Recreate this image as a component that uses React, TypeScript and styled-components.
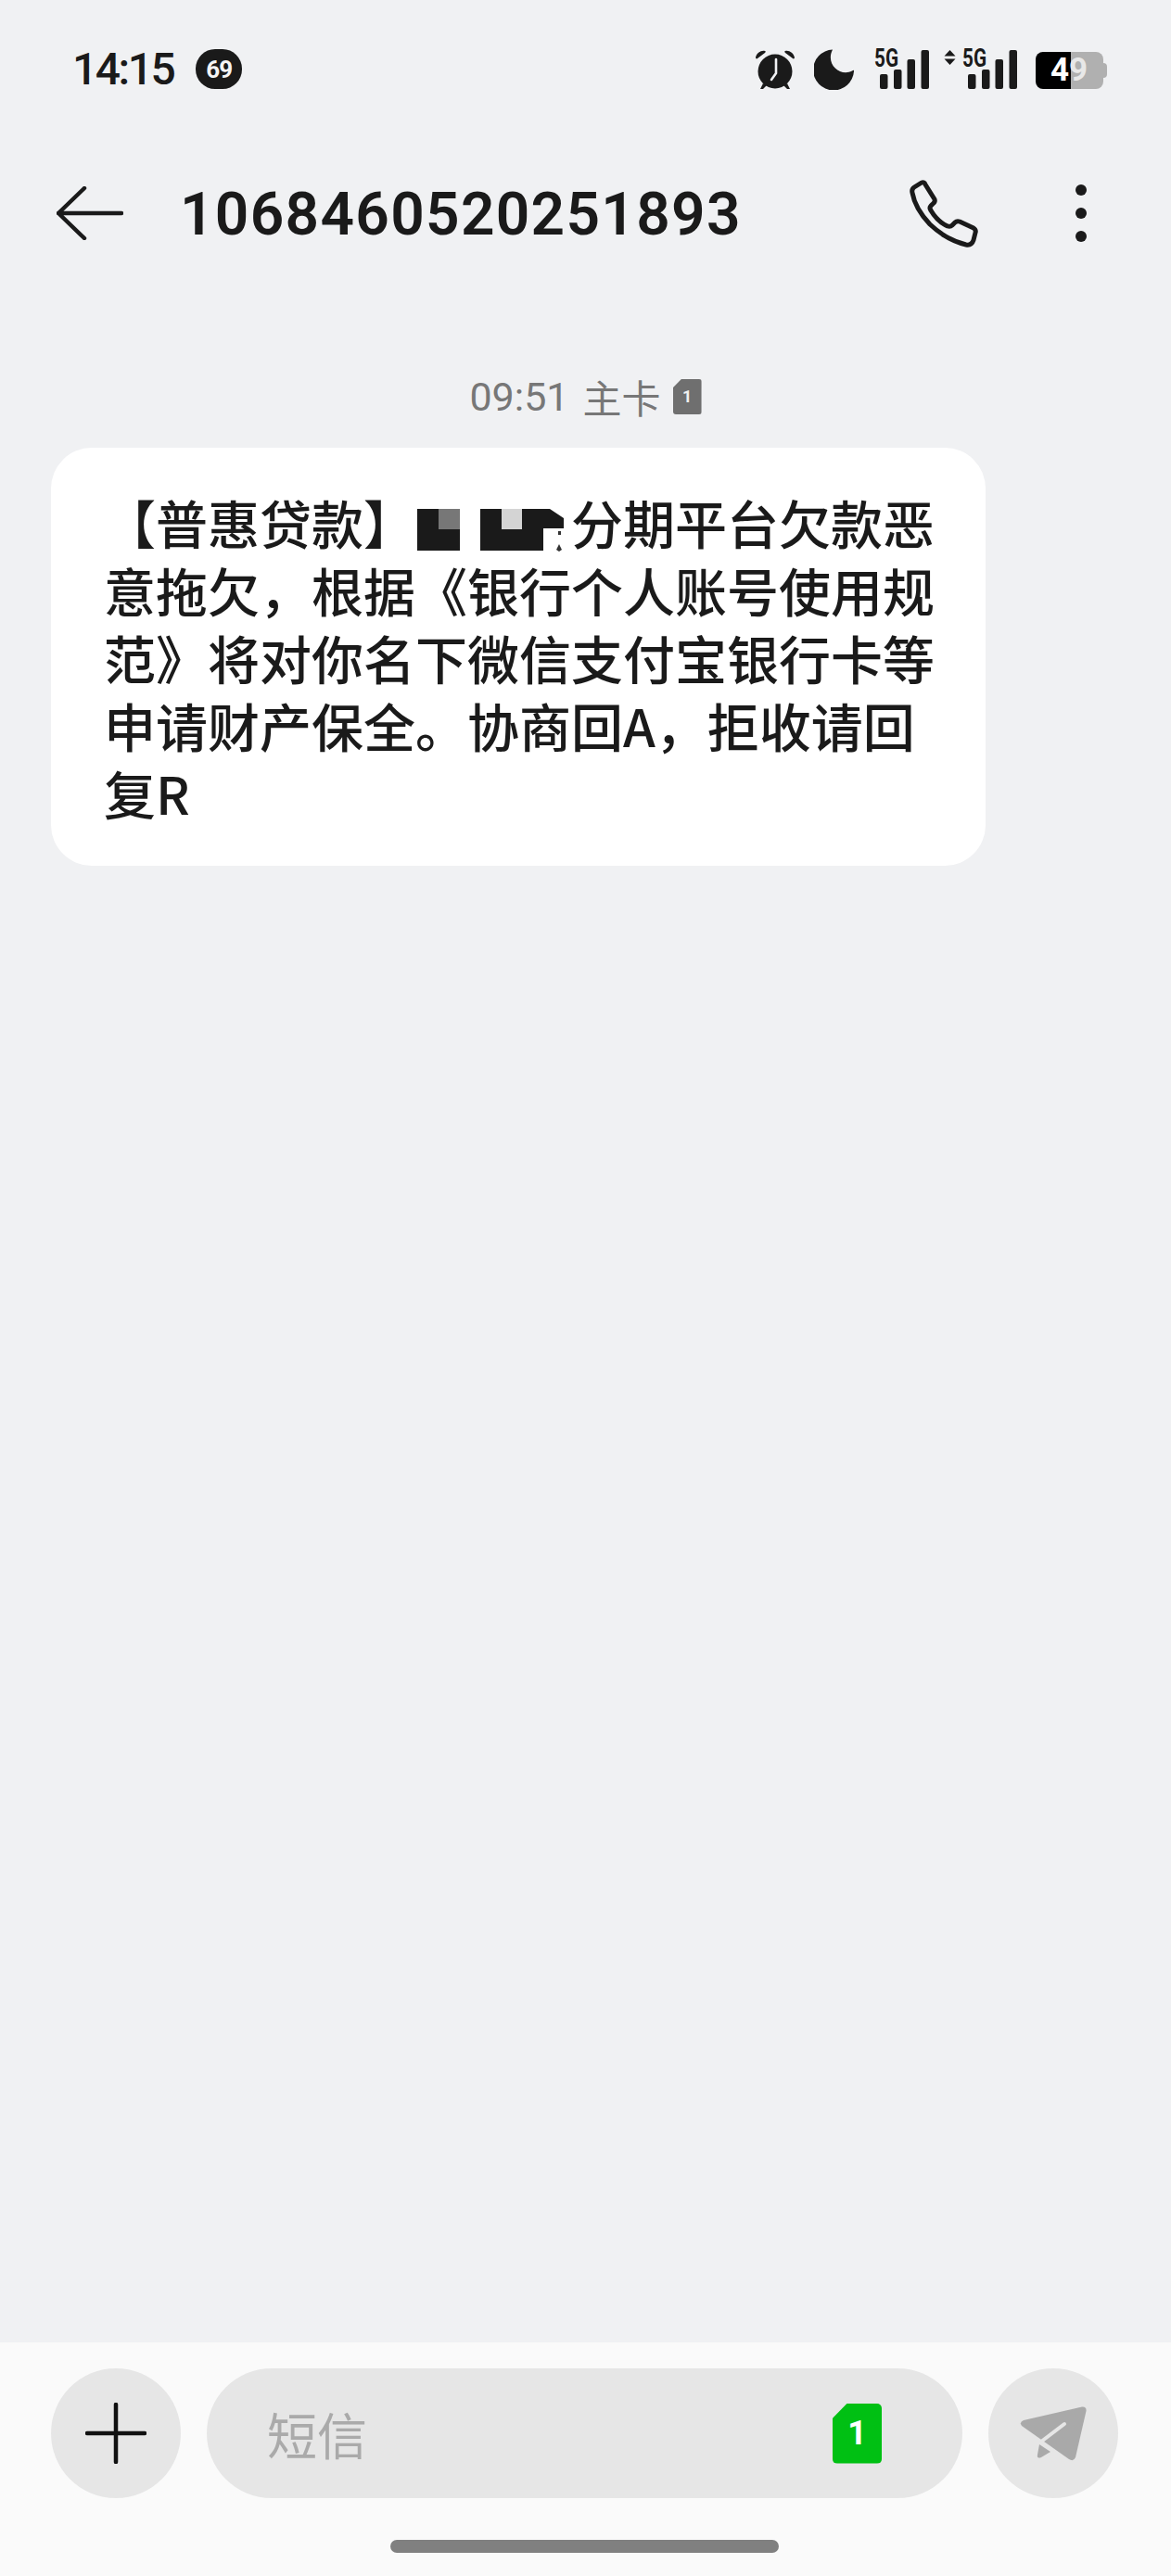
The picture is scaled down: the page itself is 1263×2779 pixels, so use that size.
import styled, { createGlobalStyle } from "styled-components";

const GlobalStyle = createGlobalStyle`
  html, body {
    margin: 0;
    padding: 0;
    background: #f0f1f3;
  }
  * {
    box-sizing: border-box;
  }
`;

function Mosaic() {
  return (
    <MosaicSvg viewBox="-1 0 168 46" width={168} height={46}>
      <rect x="1" y="0" width="46" height="45" fill="#1a1a1a" />
      <rect x="24" y="0" width="23" height="22" fill="#777777" />
      <rect x="69" y="0" width="68" height="45" fill="#1a1a1a" />
      <rect x="92" y="0" width="22" height="22" fill="#d4d4d4" />
      <path d="M137 0h7l15 10v11h-22z" fill="#1a1a1a" />
      <path d="M153 24h3v4h-3zM151 44l3-6 3 6-3 2z" fill="#333" />
    </MosaicSvg>
  );
}

const Signal = ({ arrows }: { arrows?: boolean }) => (
  <SignalSvg
    $arrows={arrows}
    width={arrows ? 78 : 59}
    height="44"
    viewBox={arrows ? "-19 0 78 44" : "0 0 59 44"}
  >
    {arrows && <path d="M-13.5 1l6 6.5h-12zM-13.5 17l6-6.5h-12z" fill="#1a1a1a" />}
    <SignalLabel x="0" y="19" textLength="26" lengthAdjust="spacingAndGlyphs">
      5G
    </SignalLabel>
    <rect x="6" y="27" width="8.500" height="16" rx="2" fill="#1a1a1a" />
    <rect x="21" y="22" width="8.500" height="21" rx="2" fill="#1a1a1a" />
    <rect x="35.500" y="11" width="8.500" height="32" rx="2" fill="#1a1a1a" />
    <rect x="50.500" y="1" width="8.500" height="42" rx="2" fill="#1a1a1a" />
  </SignalSvg>
);

export default function App() {
  return (
    <Screen>
      <GlobalStyle />
      <StatusBar>
        <Clock>14:15</Clock>
        <CountBadge>69</CountBadge>
        <StatusIcons>
          <svg width="44" height="44" viewBox="0 0 44 44">
            <circle cx="22" cy="24" r="18.500" fill="#1a1a1a" />
            <path d="M1 9c1-5 6-8 10-7 1 0 1 1 0 2L3 10c-1 1-2 0-2-1zM43 9c-1-5-6-8-10-7-1 0-1 1 0 2l8 6c1 1 2 0 2-1z" fill="#1a1a1a" />
            <path d="M9 37l-3 6h3l4-4zM35 37l3 6h-3l-4-4z" fill="#1a1a1a" />
            <path d="M23 11v15l-5 7" fill="none" stroke="#f0f1f3" strokeWidth="2.600" strokeLinecap="round" strokeLinejoin="round" />
          </svg>
          <svg width="44" height="44" viewBox="0 0 44 44">
            <path d="M20 0.500A22 22 0 1 0 43 24Q43.500 22 41 23.500C28 30 12 16 20 0.500Z" fill="#1a1a1a" />
          </svg>
          <Signal />
          <Signal arrows />
          <Battery>
            <BatteryDigit>4</BatteryDigit>
            <BatteryDigit $dim>9</BatteryDigit>
          </Battery>
        </StatusIcons>
      </StatusBar>

      <Header>
        <svg width="72" height="58" viewBox="0 0 72 58">
          <path d="M30 2L2 29l28 27M2 29h68" fill="none" stroke="#1a1a1a" strokeWidth="4.500" strokeLinecap="round" strokeLinejoin="round" />
        </svg>
        <Title>1068460520251893</Title>
        <svg width="74" height="74" viewBox="0 0 74 74">
          <path
            d="M5 9L13 4Q16 3 17 6L27 22Q28 25 25 27L23 29Q21 31 23 34Q30 46 41 51Q44 52 46 50L49 47Q51 45 54 46L69 53Q72 55 71 58L69 66Q67 72 61 71Q40 66 22 49Q6 32 3 15Q2 11 5 9Z"
            fill="none"
            stroke="#1a1a1a"
            strokeWidth="5"
            strokeLinejoin="round"
          />
        </svg>
        <MoreDots>
          <i />
          <i />
          <i />
        </MoreDots>
      </Header>

      <Thread>
        <Timestamp>
          <TimeText>09:51</TimeText>
          <CardText>主卡</CardText>
          <SimBadge $size="small">1</SimBadge>
        </Timestamp>
        <Bubble>
          <MessageLine>
            【普惠贷款】
            <Mosaic />
            分期平台欠款恶
          </MessageLine>
          <MessageLine>
            意拖欠，根据<Bracket>《</Bracket>银行个人账号使用规
          </MessageLine>
          <MessageLine>
            范<Bracket>》</Bracket>将对你名下微信支付宝银行卡等
          </MessageLine>
          <MessageLine>申请财产保全。协商回A，拒收请回</MessageLine>
          <MessageLine>复R</MessageLine>
        </Bubble>
      </Thread>

      <Composer>
        <ComposerRow>
          <RoundButton>
            <svg width="66" height="66" viewBox="0 0 66 66">
              <path d="M33 2v62M2 33h62" fill="none" stroke="#111" strokeWidth="4.500" strokeLinecap="round" />
            </svg>
          </RoundButton>
          <InputPill>
            <Placeholder>短信</Placeholder>
            <SimBadge $size="large">1</SimBadge>
          </InputPill>
          <RoundButton>
            <svg width="72" height="61" viewBox="0 0 72 61">
              <path d="M4 16L67 1.500Q72 1 71.500 6L60 56Q58 61 53 58L2 22Q-1 18 4 16Z" fill="#a9a9a9" />
              <path d="M21 42L33 50L23 56Q18 58 19 53Z" fill="#a9a9a9" />
              <path d="M48 20L23 39" fill="none" stroke="#e6e6e6" strokeWidth="4" strokeLinecap="round" />
            </svg>
          </RoundButton>
        </ComposerRow>
        <HomeIndicator />
      </Composer>
    </Screen>
  );
}

const Screen = styled.div`
  width: 1263px;
  height: 2779px;
  display: flex;
  flex-direction: column;
  background: #f0f1f3;
  overflow: hidden;
  font-family: "Noto Sans CJK SC", "Noto Sans", sans-serif;
  color: #1a1a1a;
`;

const StatusBar = styled.div`
  height: 150px;
  padding: 53px 73px 0 78px;
  display: flex;
  align-items: flex-start;
`;

const Clock = styled.span`
  font: 500 48px/44px Roboto, sans-serif;
  letter-spacing: -2.500px;
  color: #1a1a1a;
`;

const CountBadge = styled.span`
  margin-left: 24px;
  width: 50px;
  height: 43px;
  border-radius: 21px;
  background: #1a1a1a;
  color: #f4f4f4;
  display: flex;
  align-items: center;
  justify-content: center;
  font: 700 26px/1 Roboto, sans-serif;
  letter-spacing: -1px;
`;

const StatusIcons = styled.div`
  margin-left: auto;
  display: flex;
  align-items: flex-start;
  gap: 20px;
`;

const SignalSvg = styled.svg<{ $arrows?: boolean }>`
  margin-left: ${({ $arrows }) => ($arrows ? "-3px" : "1px")};
  overflow: visible;
`;

const SignalLabel = styled.text`
  font: 700 27px/19px Roboto, sans-serif;
  fill: #1a1a1a;
`;

const Battery = styled.div`
  position: relative;
  width: 73px;
  height: 40px;
  margin-top: 3px;
  padding-left: 16px;
  border-radius: 8px;
  background: linear-gradient(to right, #000 38px, #b0b0b0 38px);
  display: flex;
  align-items: center;

  &::after {
    content: "";
    position: absolute;
    right: -4px;
    top: 12px;
    width: 4px;
    height: 16px;
    border-radius: 0 4px 4px 0;
    background: #b0b0b0;
  }
`;

const BatteryDigit = styled.span<{ $dim?: boolean }>`
  font: 700 35px/40px Roboto, sans-serif;
  color: ${({ $dim }) => ($dim ? "#e8e8e8" : "#ffffff")};
`;

const Header = styled.div`
  height: 160px;
  padding: 0 91px 0 61px;
  display: flex;
  align-items: center;
`;

const Title = styled.h1`
  flex: 1;
  margin: 0 0 0 61px;
  padding-top: 4px;
  font: 600 64px/1 Roboto, sans-serif;
  letter-spacing: 1.300px;
  color: #1a1a1a;
`;

const MoreDots = styled.div`
  margin-left: 105px;
  display: flex;
  flex-direction: column;
  gap: 13px;

  i {
    display: block;
    width: 12px;
    height: 12px;
    border-radius: 50%;
    background: #1a1a1a;
  }
`;

const Thread = styled.div`
  flex: 1;
  padding: 90px 0 0 55px;
  display: flex;
  flex-direction: column;
`;

const Timestamp = styled.div`
  height: 56px;
  margin: 0 0 27px -55px;
  display: flex;
  align-items: center;
  justify-content: center;
  color: #777777;
`;

const TimeText = styled.span`
  font: 400 43px/1 Roboto, sans-serif;
`;

const CardText = styled.span`
  margin: 0 13px 0 15px;
  font-size: 42px;
  font-weight: 400;
  line-height: 1;
`;

const SimBadge = styled.span<{ $size: "small" | "large" }>`
  display: flex;
  align-items: center;
  justify-content: center;
  width: ${({ $size }) => ($size === "small" ? "31px" : "53px")};
  height: ${({ $size }) => ($size === "small" ? "38px" : "65px")};
  background: ${({ $size }) => ($size === "small" ? "#6f6f6f" : "#00c013")};
  color: ${({ $size }) => ($size === "small" ? "#f0f0f0" : "#ffffff")};
  border-radius: ${({ $size }) => ($size === "small" ? "3px" : "5px")};
  clip-path: polygon(30% 0, 100% 0, 100% 100%, 0 100%, 0 25%);
  font: 700 ${({ $size }) => ($size === "small" ? "18px" : "36px")}/1 Roboto, sans-serif;
`;

const Bubble = styled.div`
  width: 1008px;
  padding: 43px 0 43px 57px;
  background: #ffffff;
  border-radius: 44px;
`;

const MessageLine = styled.div`
  font-size: 56px;
  line-height: 73px;
  font-weight: 500;
  white-space: nowrap;
  color: #1a1a1a;
`;

const Bracket = styled.span`
  font-family: "Noto Sans CJK TC", sans-serif;
`;

const MosaicSvg = styled.svg`
  vertical-align: -8px;
`;

const Composer = styled.div`
  height: 252px;
  padding-top: 28px;
  background: #fafafa;
  display: flex;
  flex-direction: column;
`;

const ComposerRow = styled.div`
  height: 140px;
  padding: 0 57px 0 55px;
  display: flex;
  gap: 28px;
`;

const RoundButton = styled.div`
  flex: none;
  width: 140px;
  height: 140px;
  border-radius: 50%;
  background: #e6e6e6;
  display: flex;
  align-items: center;
  justify-content: center;
`;

const InputPill = styled.div`
  flex: 1;
  height: 140px;
  padding: 0 87px 0 65px;
  border-radius: 70px;
  background: #e6e6e6;
  display: flex;
  align-items: center;
  justify-content: space-between;
`;

const Placeholder = styled.span`
  font-size: 54px;
  color: #aaaaaa;
`;

const HomeIndicator = styled.div`
  width: 419px;
  height: 14px;
  margin: 45px 0 0 421px;
  border-radius: 7px;
  background: #808080;
`;
